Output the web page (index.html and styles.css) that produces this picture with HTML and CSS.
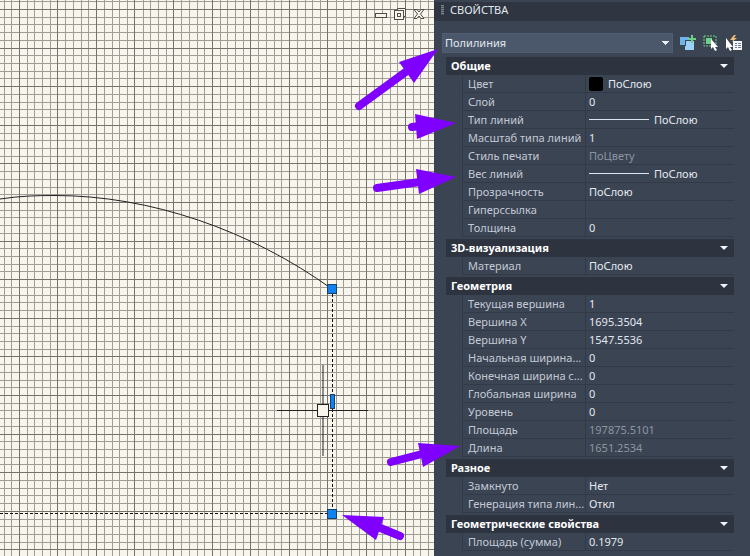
FILE: index.html
```html
<!DOCTYPE html>
<html lang="ru">
<head>
<meta charset="utf-8">
<title>Свойства</title>
<link rel="stylesheet" href="styles.css">
</head>
<body>
<div class="workspace">
  <main class="canvas">
    <svg class="drawing" aria-hidden="true">
      <defs>
        <pattern id="grid" x="19" y="9" width="193" height="193" patternUnits="userSpaceOnUse">
          <path class="minor" d="M8.500 0v193M15.500 0v193M23.500 0v193M31.500 0v193M46.500 0v193M54.500 0v193M62.500 0v193M69.500 0v193M85.500 0v193M93.500 0v193M100.500 0v193M108.500 0v193M124.500 0v193M131.500 0v193M139.500 0v193M147.500 0v193M162.500 0v193M170.500 0v193M178.500 0v193M185.500 0v193"/>
          <path class="minor" d="M0 8.500h193M0 15.500h193M0 23.500h193M0 31.500h193M0 46.500h193M0 54.500h193M0 62.500h193M0 69.500h193M0 85.500h193M0 93.500h193M0 100.500h193M0 108.500h193M0 124.500h193M0 131.500h193M0 139.500h193M0 147.500h193M0 162.500h193M0 170.500h193M0 178.500h193M0 185.500h193"/>
          <path class="major" d="M.5 0v193M38.500 0v193M77.500 0v193M115.500 0v193M154.500 0v193M0 .5h193M0 39.500h193M0 77.500h193M0 116.500h193M0 154.500h193"/>
        </pattern>
      </defs>
      <rect width="100%" height="100%" fill="url(#grid)"/>
      <path class="curve" d="M0 199C20 196 35 195.500 55 195.500C150 195.500 250 230 332 289"/>
      <path class="dashed" d="M332.500 294V509M0 513.500H328"/>
      <rect class="grip" x="327.500" y="284.500" width="9" height="9"/>
      <rect class="grip" x="327.500" y="509.500" width="9" height="9"/>
      <rect class="grip" x="330.500" y="394.500" width="4" height="14"/>
      <path class="cross" d="M277 410.500H368M323 365V456"/>
      <rect class="pick" x="317.500" y="404.500" width="11" height="12"/>
    </svg>
    <div class="window-controls">
      <button type="button" aria-label="Свернуть"><svg width="12" height="12"><rect x=".5" y="5.500" width="11" height="4"/></svg></button>
      <button type="button" aria-label="Восстановить"><svg width="12" height="12"><path d="M3.500 2.500v-2h8v8h-2"/><rect x=".5" y="2.500" width="9" height="9"/><rect x="3.500" y="5.500" width="3" height="3"/></svg></button>
      <button type="button" aria-label="Закрыть"><svg width="12" height="12"><path d="M1 1.500h3l2 2.500 2-2.500h3L7.500 6l3.500 4.500H8L6 8l-2 2.500H1L4.500 6z"/></svg></button>
    </div>
  </main>

  <aside class="panel">
    <header class="title"><span class="handle"></span><h1>СВОЙСТВА</h1></header>
    <div class="toolbar">
      <select aria-label="Тип объекта"><option>Полилиния</option></select>
      <button type="button" aria-label="Переключить PICKADD"><svg width="16" height="16"><path fill="#6fb4ea" d="M0 2h9v3H5v5H0z"/><path fill="#9bd0f7" d="M6 6h8v9H5v-4h1z"/><path stroke="#6fcf82" stroke-width="2" d="M12 0v8M8 4h8"/></svg></button>
      <button type="button" aria-label="Выбрать объекты"><svg width="16" height="16"><rect x="1" y="1" width="12" height="10" fill="none" stroke="#6fcf82" stroke-dasharray="2 1"/><path fill="#6fcf8a" d="M3 3h6v6H3z"/><path fill="#fff" d="M8 4v10l2-2 2 4 2-1-2-3h3z"/></svg></button>
      <button type="button" aria-label="Быстрый выбор"><svg width="16" height="16"><path fill="#f0bd76" d="M8 0L4 5h3L6 7l5-4H8l2-3z"/><path fill="#fff" d="M0 3v11l2-2 2 4 2-1-2-3h3z"/><path fill="#f3f5f8" d="M7 6h9v9H7z"/><path stroke="#6c7f9b" d="M9 8.500h2M12 8.500h3M9 10.500h2M12 10.500h3M9 12.500h2M12 12.500h3"/></svg></button>
    </div>
    <table class="props">
      <colgroup><col class="gutter"><col class="names"><col></colgroup>
      <tbody>
        <tr class="section"><th colspan="3"><button type="button">Общие</button></th></tr>
        <tr><td></td><th scope="row">Цвет</th><td><span class="value"><i class="swatch"></i>ПоСлою</span></td></tr>
        <tr><td></td><th scope="row">Слой</th><td>0</td></tr>
        <tr><td></td><th scope="row">Тип линий</th><td><span class="value"><i class="line"></i>ПоСлою</span></td></tr>
        <tr><td></td><th scope="row">Масштаб типа линий</th><td>1</td></tr>
        <tr><td></td><th scope="row">Стиль печати</th><td class="readonly">ПоЦвету</td></tr>
        <tr><td></td><th scope="row">Вес линий</th><td><span class="value"><i class="line"></i>ПоСлою</span></td></tr>
        <tr><td></td><th scope="row">Прозрачность</th><td>ПоСлою</td></tr>
        <tr><td></td><th scope="row">Гиперссылка</th><td></td></tr>
        <tr><td></td><th scope="row">Толщина</th><td>0</td></tr>
      </tbody>
      <tbody>
        <tr class="section"><th colspan="3"><button type="button">3D-визуализация</button></th></tr>
        <tr><td></td><th scope="row">Материал</th><td>ПоСлою</td></tr>
      </tbody>
      <tbody>
        <tr class="section"><th colspan="3"><button type="button">Геометрия</button></th></tr>
        <tr><td></td><th scope="row">Текущая вершина</th><td>1</td></tr>
        <tr><td></td><th scope="row">Вершина X</th><td>1695.3504</td></tr>
        <tr><td></td><th scope="row">Вершина Y</th><td>1547.5536</td></tr>
        <tr><td></td><th scope="row">Начальная ширина...</th><td>0</td></tr>
        <tr><td></td><th scope="row">Конечная ширина с...</th><td>0</td></tr>
        <tr><td></td><th scope="row">Глобальная ширина</th><td>0</td></tr>
        <tr><td></td><th scope="row">Уровень</th><td>0</td></tr>
        <tr><td></td><th scope="row">Площадь</th><td class="readonly">197875.5101</td></tr>
        <tr><td></td><th scope="row">Длина</th><td class="readonly">1651.2534</td></tr>
      </tbody>
      <tbody>
        <tr class="section"><th colspan="3"><button type="button">Разное</button></th></tr>
        <tr><td></td><th scope="row">Замкнуто</th><td>Нет</td></tr>
        <tr><td></td><th scope="row">Генерация типа лин...</th><td>Откл</td></tr>
      </tbody>
      <tbody>
        <tr class="section"><th colspan="3"><button type="button">Геометрические свойства</button></th></tr>
        <tr><td></td><th scope="row">Площадь (сумма)</th><td>0.1979</td></tr>
      </tbody>
    </table>
  </aside>

  <svg class="arrows" aria-hidden="true">
    <path d="M359 106L407 71M412 127L420 126M377 188L420 182M391 462L422 454M400 536L378 527"/>
    <path class="heads" d="M438 49L399 62L414 83zM456 123L415 114L417 139zM456 177L416 169L419 194zM460 446L418 443L423 467zM342 515L384 517L376 540z"/>
  </svg>
</div>
</body>
</html>
```
FILE: styles.css
```css
* { box-sizing: border-box; }

body {
  margin: 0;
  font: 11px/16px "Noto Sans", sans-serif;
  color: #e2e7ef;
}

button {
  padding: 0;
  border: 0;
  background: none;
  color: inherit;
  font: inherit;
}

.workspace {
  position: relative;
  display: grid;
  grid-template-columns: minmax(0, 434fr) minmax(300px, 316fr);
  min-height: 100vh;
  overflow: hidden;
}

.canvas {
  position: relative;
  background: #f8f5ed;
}

.drawing, .arrows {
  position: absolute;
  inset: 0;
  width: 100%;
  height: 100%;
}

.drawing { fill: none; }
.minor { stroke: #a09e97; }
.major { stroke: #75736d; }
.curve { stroke: #222; }
.dashed { stroke: #111; stroke-dasharray: 3 2; }
.grip { fill: #0f82f0; stroke: #17406b; }
.cross { stroke: #222; }
.pick { fill: #f8f5ed; stroke: #222; }

.window-controls {
  position: relative;
  display: flex;
  justify-content: flex-end;
  gap: 7px;
  padding: 8px 9px 0 0;
}

.window-controls button { height: 12px; }

.window-controls svg {
  display: block;
  fill: #f8f5ed;
  stroke: #4f4d4a;
}

.arrows {
  pointer-events: none;
  fill: none;
  stroke: #7f00ff;
  stroke-width: 8;
  stroke-linecap: round;
}

.heads { fill: #7f00ff; stroke: none; }

.panel {
  background: #3b4453;
  padding-bottom: 3px;
}

.title {
  display: flex;
  align-items: center;
  gap: 6px;
  height: 21px;
  padding: 0 0 4px 7px;
  background: #2f3641;
  border-top: 2px solid #3b4453;
}

.title h1 {
  margin: 0;
  font-size: 11px;
  font-weight: 400;
}

.handle {
  width: 3px;
  height: 10px;
  background: repeating-linear-gradient(#79818e 0 1px, #4a525f 1px 2px);
}

.toolbar {
  display: flex;
  align-items: center;
  gap: 7px;
  height: 34px;
  padding: 10px 8px 0;
}

.toolbar select {
  flex: 1;
  min-width: 0;
  height: 20px;
  padding: 0 2px;
  appearance: none;
  border: 1px solid #505d72;
  border-radius: 0;
  background-color: #4b586c;
  background-image: linear-gradient(to bottom right, #e8edf5 50%, transparent 50%), linear-gradient(to bottom left, #e8edf5 50%, transparent 50%);
  background-repeat: no-repeat;
  background-size: 4px 4px;
  background-position: right 2px center, right 6px center;
  color: inherit;
  font: inherit;
}

.toolbar button, .toolbar svg {
  display: block;
  width: 16px;
  height: 16px;
}

.props {
  width: calc(100% - 28px);
  margin-left: 12px;
  table-layout: fixed;
  border-collapse: separate;
  border-spacing: 0;
}

.gutter { width: 16px; }
.names { width: 124px; }

.props td, .props th {
  height: 18px;
  padding: 0 0 0 3px;
  border-bottom: 1px solid #323a47;
  text-align: left;
  font-weight: 400;
  white-space: nowrap;
}

.props tr th[scope] {
  padding-left: 5px;
  border-left: 1px solid #323a47;
  border-right: 1px solid #323a47;
  color: #c3cad6;
}

.props td:first-child { border-bottom: 0; }

.props td.readonly { color: #8b94a1; }

.props .section th {
  height: 20px;
  padding: 0;
  border-top: 2px solid #3b4453;
  border-bottom: 0;
  background: #2d333f;
}

.section button {
  display: flex;
  align-items: center;
  justify-content: space-between;
  width: 100%;
  height: 18px;
  padding: 0 6px 0 5px;
  color: #fff;
  font-weight: 700;
}

.section button::after {
  content: "";
  border: 4px solid transparent;
  border-top-color: #f0f3f8;
  border-bottom: 0;
}

.value {
  display: flex;
  align-items: center;
  gap: 5px;
}

.swatch {
  width: 14px;
  height: 14px;
  border-radius: 2px;
  background: #000;
}

.line {
  width: 60px;
  height: 1px;
  background: #dbe3ef;
}
```
